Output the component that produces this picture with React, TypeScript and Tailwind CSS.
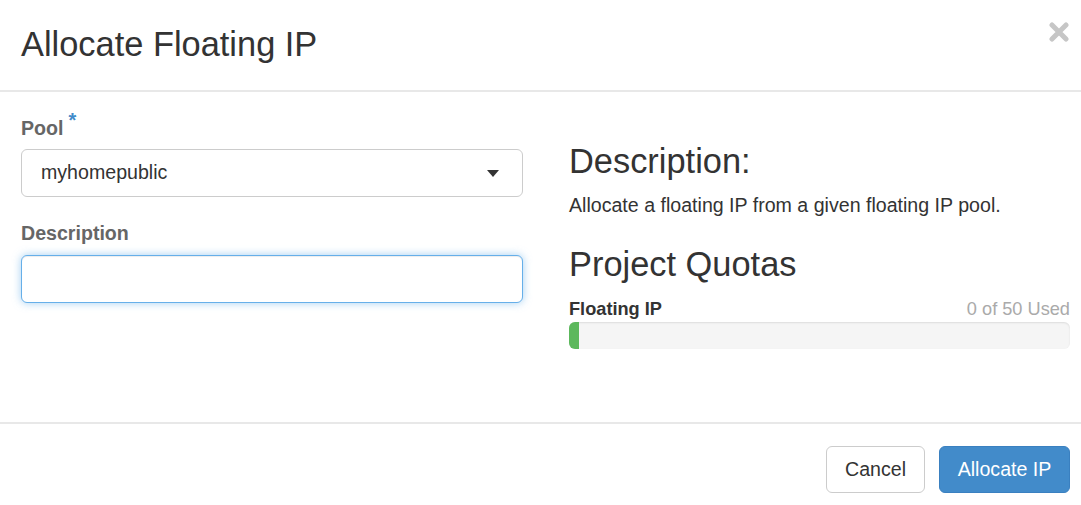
export default function App() {
  return (
    <div className="h-[505px] w-[1081px] overflow-hidden bg-white font-['Liberation_Sans',Arial,sans-serif] text-[#333]">
      {/* header */}
      <div className="flex h-[92px] items-start justify-between border-b-2 border-[#e8e8e8] pl-[21px] pr-[12px] pt-[24px]">
        <h3 className="text-[34.4px] leading-[40px] font-normal">Allocate Floating IP</h3>
        <button className="mt-[-2px] text-[#c6c6c6]" aria-label="Close">
          <svg width="20" height="20" viewBox="0 0 20 20">
            <path d="M3 3 L17 17 M17 3 L3 17" stroke="currentColor" strokeWidth="5" strokeLinecap="round" />
          </svg>
        </button>
      </div>

      {/* body */}
      <div className="grid h-[330px] grid-cols-[502px_501px] gap-x-[46px] pl-[21px] pr-[11px] pt-[22px]">
        <div className="flex flex-col">
          <label className="flex items-start text-[19.6px] leading-[28px] font-bold text-[#666]">
            Pool
            <span className="ml-[5px] mt-[-3px] text-[20px] leading-[18px] text-[#428bca]">*</span>
          </label>
          <div className="mt-[7px] flex h-[48px] items-center justify-between rounded-[6px] border-[1.5px] border-[#ccc] bg-white pl-[19px] pr-[23px]">
            <span className="text-[19.6px] text-[#333]">myhomepublic</span>
            <svg width="12" height="7" viewBox="0 0 12 7">
              <path d="M0 0 H12 L6 7 Z" fill="#333" />
            </svg>
          </div>

          <label className="mt-[22px] text-[19.6px] leading-[28px] font-bold text-[#666]">Description</label>
          <input
            className="mt-[8px] h-[48px] rounded-[6px] border-[1.5px] border-[#66afe9] bg-white px-[17px] text-[19.6px] outline-none shadow-[inset_0_1px_1px_rgba(0,0,0,0.075),0_0_8px_rgba(102,175,233,0.6)]"
          />
        </div>

        <div className="flex flex-col pt-[27px]">
          <h3 className="text-[34.4px] leading-[40px] font-normal">Description:</h3>
          <p className="mt-[10px] text-[19.6px] leading-[28px]">Allocate a floating IP from a given floating IP pool.</p>
          <h3 className="mt-[25px] text-[34.4px] leading-[40px] font-normal">Project Quotas</h3>
          <div className="mt-[13px] flex items-center justify-between text-[18.2px] leading-[24px]">
            <span className="font-bold text-[#333]">Floating IP</span>
            <span className="text-[#aaa]">0 of 50 Used</span>
          </div>
          <div className="mt-[1px] h-[27px] overflow-hidden rounded-[6px] bg-[#f5f5f5] shadow-[inset_0_1px_2px_rgba(0,0,0,0.1)]">
            <div className="h-full w-[10px] bg-[#5cb85c]" />
          </div>
        </div>
      </div>

      {/* footer */}
      <div className="flex justify-end gap-[14px] border-t-2 border-[#e8e8e8] pr-[11px] pt-[22px]">
        <button className="h-[47px] w-[99px] rounded-[6px] border-[1.5px] border-[#ccc] bg-white text-[19.6px] text-[#333]">
          Cancel
        </button>
        <button className="h-[47px] w-[131px] rounded-[6px] border-[1.5px] border-[#3a80c0] bg-[#428bca] text-[19.6px] text-white">
          Allocate IP
        </button>
      </div>
    </div>
  );
}
